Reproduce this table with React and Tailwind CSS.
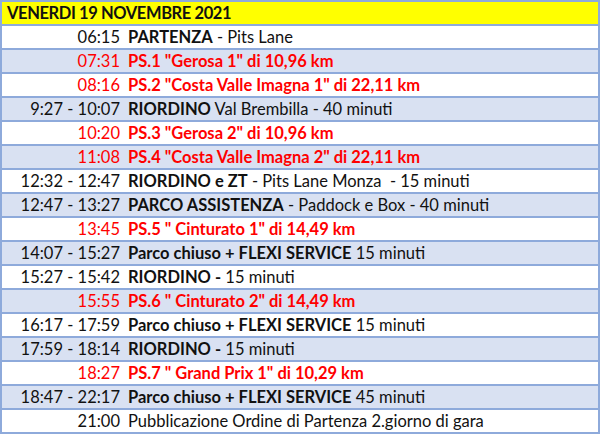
import React from "react";

const rows = [
  { t: "06:15", b: "PARTENZA", r: " - Pits Lane" },
  { t: "07:31", b: "PS.1 \"Gerosa 1\" di 10,96 km", red: true },
  { t: "08:16", b: "PS.2 \"Costa Valle Imagna 1\" di 22,11 km", red: true },
  { t: "9:27 - 10:07", b: "RIORDINO", r: " Val Brembilla - 40 minuti" },
  { t: "10:20", b: "PS.3 \"Gerosa 2\" di 10,96 km", red: true },
  { t: "11:08", b: "PS.4 \"Costa Valle Imagna 2\" di 22,11 km", red: true },
  { t: "12:32 - 12:47", b: "RIORDINO e ZT", r: " - Pits Lane Monza  - 15 minuti" },
  { t: "12:47 - 13:27", b: "PARCO ASSISTENZA", r: " - Paddock e Box - 40 minuti" },
  { t: "13:45", b: "PS.5 \" Cinturato 1\" di 14,49 km", red: true },
  { t: "14:07 - 15:27", b: "Parco chiuso + FLEXI SERVICE", r: " 15 minuti" },
  { t: "15:27 - 15:42", b: "RIORDINO -", r: " 15 minuti" },
  { t: "15:55", b: "PS.6 \" Cinturato 2\" di 14,49 km", red: true },
  { t: "16:17 - 17:59", b: "Parco chiuso + FLEXI SERVICE", r: " 15 minuti" },
  { t: "17:59 - 18:14", b: "RIORDINO -", r: " 15 minuti" },
  { t: "18:27", b: "PS.7 \" Grand Prix 1\" di 10,29 km", red: true },
  { t: "18:47 - 22:17", b: "Parco chiuso + FLEXI SERVICE", r: " 45 minuti" },
  { t: "21:00", r: "Pubblicazione Ordine di Partenza 2.giorno di gara" },
];

export default function App() {
  return (
    <div
      className="w-[600px] h-[434px] bg-[#8eaadb] p-[2px] flex flex-col gap-[2px] text-[16.5px] leading-[22px] text-[#111]"
      style={{ fontFamily: "Lato, 'Open Sans', sans-serif" }}
    >
      <div className="h-[22px] bg-[#ffff00] px-[5px] font-bold whitespace-nowrap tracking-[-0.4px]">
        VENERDI 19 NOVEMBRE 2021
      </div>
      {rows.map((row, i) => (
        <div
          key={i}
          className={
            "h-[22px] flex whitespace-pre " +
            (i % 2 === 0 ? "bg-white" : "bg-[#d9e1f2]")
          }
        >
          <div className={"w-[118px] text-right " + (row.red ? "text-[#ff0000]" : "")}>
            {row.t}
          </div>
          <div className={"pl-[8px] " + (row.red ? "text-[#ff0000]" : "")}>
            {row.b && <span className="font-bold">{row.b}</span>}
            {row.r}
          </div>
        </div>
      ))}
    </div>
  );
}
